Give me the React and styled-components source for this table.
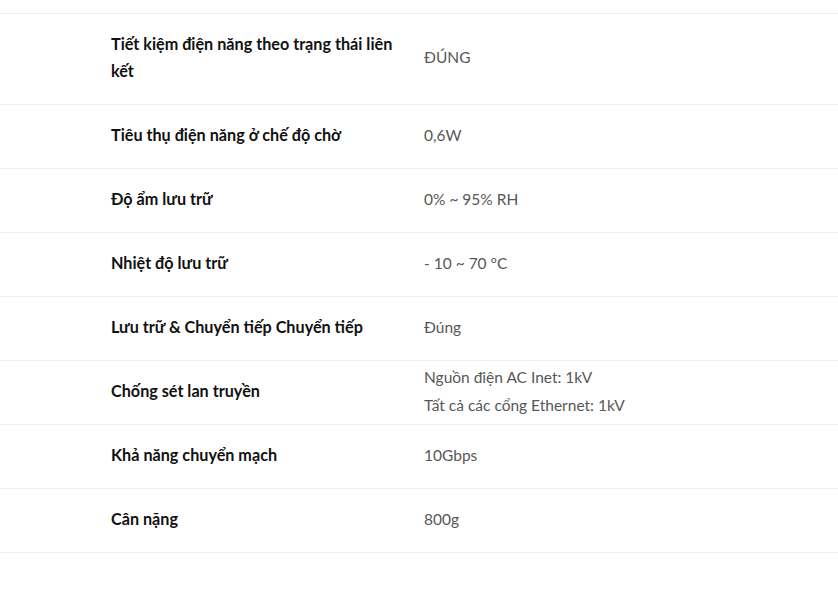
import React from 'react';
import styled, { createGlobalStyle } from 'styled-components';

const GlobalStyle = createGlobalStyle`
  html, body {
    margin: 0;
    padding: 0;
    background: #ffffff;
  }
  body {
    font-family: Lato, "Open Sans", sans-serif;
  }
`;

const Page = styled.div`
  padding-top: 13px;
  width: 838px;
`;

const Table = styled.div`
  border-bottom: 1px solid #efefef;
`;

const Row = styled.div`
  display: grid;
  grid-template-columns: 313px 1fr;
  align-items: center;
  min-height: 63px;
  padding: 0 0 0 111px;
  border-top: 1px solid #efefef;
`;

const Label = styled.div`
  padding: 16px 24px 20px 0;
  font-size: 16.2px;
  font-weight: 700;
  line-height: 27px;
  color: #111111;
`;

const Value = styled.div`
  padding-bottom: 4px;
  font-size: 15.5px;
  font-weight: 400;
  line-height: 28px;
  color: #575757;
`;

const specs = [
  { label: 'Tiết kiệm điện năng theo trạng thái liên kết', value: ['ĐÚNG'] },
  { label: 'Tiêu thụ điện năng ở chế độ chờ', value: ['0,6W'] },
  { label: 'Độ ẩm lưu trữ', value: ['0% ~ 95% RH'] },
  { label: 'Nhiệt độ lưu trữ', value: ['- 10 ~ 70 °C'] },
  { label: 'Lưu trữ & Chuyển tiếp Chuyển tiếp', value: ['Đúng'] },
  {
    label: 'Chống sét lan truyền',
    value: ['Nguồn điện AC Inet: 1kV', 'Tất cả các cổng Ethernet: 1kV'],
  },
  { label: 'Khả năng chuyển mạch', value: ['10Gbps'] },
  { label: 'Cân nặng', value: ['800g'] },
];

const App = () => {
  return (
    <Page>
      <GlobalStyle />
      <Table>
        {specs.map((s) => (
          <Row key={s.label}>
            <Label>{s.label}</Label>
            <Value>
              {s.value.map((v) => (
                <div key={v}>{v}</div>
              ))}
            </Value>
          </Row>
        ))}
      </Table>
    </Page>
  );
};

export default App;
